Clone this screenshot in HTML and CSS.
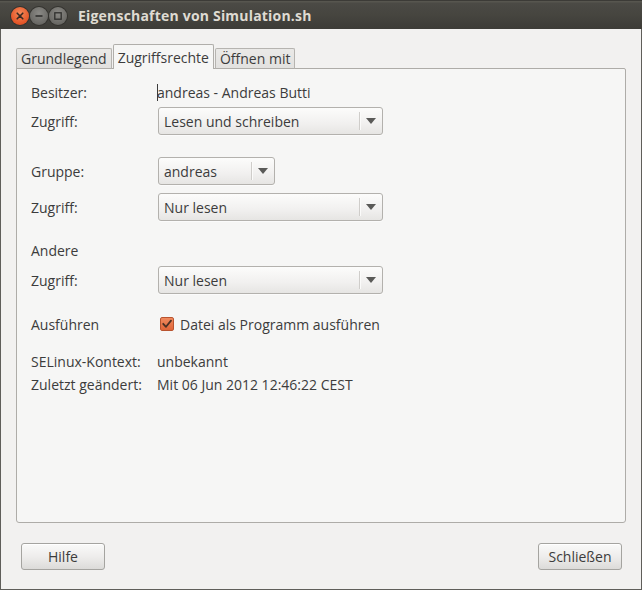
FILE: index.html
```html
<!DOCTYPE html>
<html lang="de">
<head>
<meta charset="utf-8">
<title>Eigenschaften von Simulation.sh</title>
<link rel="stylesheet" href="styles.css">
</head>
<body>
<div class="window">
  <header class="titlebar">
    <div class="wbuttons">
      <span class="wbtn close">
        <svg width="18" height="18" viewBox="0 0 18 18"><path d="M6.2 6.2 L11.8 11.8 M11.8 6.2 L6.2 11.8" stroke="#3a2a22" stroke-width="1.6" stroke-linecap="round"/></svg>
      </span>
      <span class="wbtn">
        <svg width="18" height="18" viewBox="0 0 18 18"><path d="M5.5 9 H12.5" stroke="#2f2f2d" stroke-width="1.6"/></svg>
      </span>
      <span class="wbtn">
        <svg width="18" height="18" viewBox="0 0 18 18"><rect x="5.8" y="5.8" width="6.4" height="6.4" fill="none" stroke="#2f2f2d" stroke-width="1.3"/></svg>
      </span>
    </div>
    <div class="title">Eigenschaften von Simulation.sh</div>
  </header>
  <main class="content">
    <nav class="tabs">
      <div class="tab">Grundlegend</div>
      <div class="tab active">Zugriffsrechte</div>
      <div class="tab">Öffnen mit</div>
    </nav>
    <section class="panel">
      <div class="row r-owner">
        <span class="label">Besitzer:</span>
        <span class="value"><span class="cursor"></span>andreas - Andreas Butti</span>
      </div>
      <div class="row r-tight">
        <span class="label">Zugriff:</span>
        <div class="combo wide"><span class="ctext">Lesen und schreiben</span><span class="carrow"></span></div>
      </div>
      <div class="row r-group">
        <span class="label">Gruppe:</span>
        <div class="combo narrow"><span class="ctext">andreas</span><span class="carrow"></span></div>
      </div>
      <div class="row r-gap8">
        <span class="label">Zugriff:</span>
        <div class="combo wide"><span class="ctext">Nur lesen</span><span class="carrow"></span></div>
      </div>
      <div class="row r-other">
        <span class="label">Andere</span>
      </div>
      <div class="row r-tight2">
        <span class="label">Zugriff:</span>
        <div class="combo wide"><span class="ctext">Nur lesen</span><span class="carrow"></span></div>
      </div>
      <div class="row r-exec">
        <span class="label">Ausführen</span>
        <label class="check">
          <span class="box">
            <svg width="14" height="14" viewBox="0 0 14 14"><path d="M3.2 6.8 L6 9.8 L11 3.6" fill="none" stroke="#4b3024" stroke-width="1.8" stroke-linecap="round" stroke-linejoin="round"/></svg>
          </span>
          <span>Datei als Programm ausführen</span>
        </label>
      </div>
      <div class="row small r-se">
        <span class="label">SELinux-Kontext:</span>
        <span class="value">unbekannt</span>
      </div>
      <div class="row small r-mod">
        <span class="label">Zuletzt geändert:</span>
        <span class="value">Mit 06 Jun 2012 12:46:22 CEST</span>
      </div>
    </section>
    <footer class="actions">
      <button class="btn">Hilfe</button>
      <button class="btn">Schließen</button>
    </footer>
  </main>
</div>
</body>
</html>
```

FILE: styles.css
```css
* { box-sizing: border-box; }
html, body { margin: 0; padding: 0; }
body {
  width: 642px;
  height: 590px;
  overflow: hidden;
  font-family: "Open Sans", "Noto Sans", sans-serif;
  font-size: 14px;
  color: #3c3c3c;
  background: #f2f1f0;
}
.window {
  width: 642px;
  height: 590px;
  display: flex;
  flex-direction: column;
  border-left: 1px solid #5f5e5a;
  border-right: 1px solid #5f5e5a;
  border-bottom: 1px solid #5f5e5a;
  background: #f2f1f0;
}
.titlebar {
  height: 29px;
  flex: none;
  display: flex;
  align-items: center;
  background: linear-gradient(#57564f 0, #57564f 1px, #4b4a45 2px, #46453f 14px, #3c3b37 29px);
  border-top: 1px solid #3c3b37;
  margin: 0 -1px;
}
.wbuttons {
  display: flex;
  gap: 1px;
  padding-left: 11px;
  padding-top: 2px;
}
.wbtn {
  width: 18px;
  height: 18px;
  border-radius: 50%;
  background: radial-gradient(circle at 50% 35%, #8a8985, #6a6965 70%, #55544f);
  box-shadow: 0 0 0 1px #34332f;
  display: flex;
}
.wbtn.close {
  background: radial-gradient(circle at 50% 35%, #f58a5a, #e5582a 65%, #c8441b);
}
.title {
  margin-left: 11px;
  padding-top: 1px;
  font-weight: bold;
  font-size: 14px;
  color: #dfdbd2;
  letter-spacing: 0.2px;
}
.content {
  flex: 1;
  display: flex;
  flex-direction: column;
  padding: 15px 15px 0 15px;
}
.tabs {
  display: flex;
  align-items: flex-end;
  gap: 1px;
  margin-bottom: -1px;
  position: relative;
  z-index: 1;
  height: 25px;
}
.tab {
  height: 21px;
  padding: 0 4px;
  display: flex;
  align-items: center;
  background: linear-gradient(#eae9e7, #e2e1df);
  border: 1px solid #b6b4b0;
  border-bottom-color: #afada9;
  border-radius: 2px 2px 0 0;
  line-height: 1;
}
.tab.active {
  height: 25px;
  background: #f6f6f5;
  border-color: #b0aeaa;
  border-bottom: none;
  padding-top: 1px;
}
.panel {
  height: 455px;
  flex: none;
  background: #f6f6f5;
  border: 1px solid #aeaca8;
  border-radius: 0 2px 3px 3px;
  padding: 9px 14px 0 14px;
  display: flex;
  flex-direction: column;
}
.row {
  display: flex;
  align-items: center;
  height: 28px;
}
.row.small { height: 20px; }
.r-tight { margin-top: 1px; }
.r-group { margin-top: 22px; }
.r-gap8 { margin-top: 8px; }
.r-other { margin-top: 15px; }
.r-tight2 { margin-top: 2px; }
.r-exec { margin-top: 16px; }
.r-se { margin-top: 13px; }
.r-mod { margin-top: 3px; }
.label {
  width: 126px;
  flex: none;
}
.value { display: flex; align-items: center; }
.cursor {
  width: 1px;
  height: 17px;
  background: #3c3c3c;
  margin-right: -1px;
}
.combo {
  margin-left: 1px;
  height: 28px;
  display: flex;
  align-items: center;
  border: 1px solid #b3b1ad;
  border-radius: 3px;
  background: linear-gradient(#fcfcfb, #f1f0ef 60%, #e6e5e3);
  box-shadow: 0 1px 0 rgba(255,255,255,0.6);
}
.combo.wide { width: 225px; }
.combo.narrow { width: 117px; }
.ctext {
  flex: 1;
  padding-left: 5px;
}
.carrow {
  width: 23px;
  height: 18px;
  border-left: 1px solid #cfcdca;
  box-shadow: inset 1px 0 0 #fbfbfa;
  position: relative;
}
.carrow::after {
  content: "";
  position: absolute;
  left: 6px;
  top: 6px;
  border-left: 5px solid transparent;
  border-right: 5px solid transparent;
  border-top: 6px solid #5a5a58;
}
.check {
  display: flex;
  align-items: center;
  gap: 6px;
  margin-left: 3px;
}
.box {
  width: 14px;
  height: 14px;
  border-radius: 2px;
  border: 1px solid #b9542f;
  background: linear-gradient(#f08a5e, #e06538);
  display: flex;
  align-items: center;
  justify-content: center;
}
.box svg { margin: -1px; }
.actions {
  display: flex;
  justify-content: space-between;
  padding: 0 4px 0 5px;
  margin-top: 20px;
}
.btn {
  width: 84px;
  height: 27px;
  font-family: inherit;
  font-size: 14px;
  color: #3c3c3c;
  border: 1px solid #a5a4a0;
  border-radius: 3px;
  background: linear-gradient(#fafaf9, #eeedec 50%, #dcdbd9);
  box-shadow: inset 0 1px 0 #ffffff;
  padding: 0;
}
```
